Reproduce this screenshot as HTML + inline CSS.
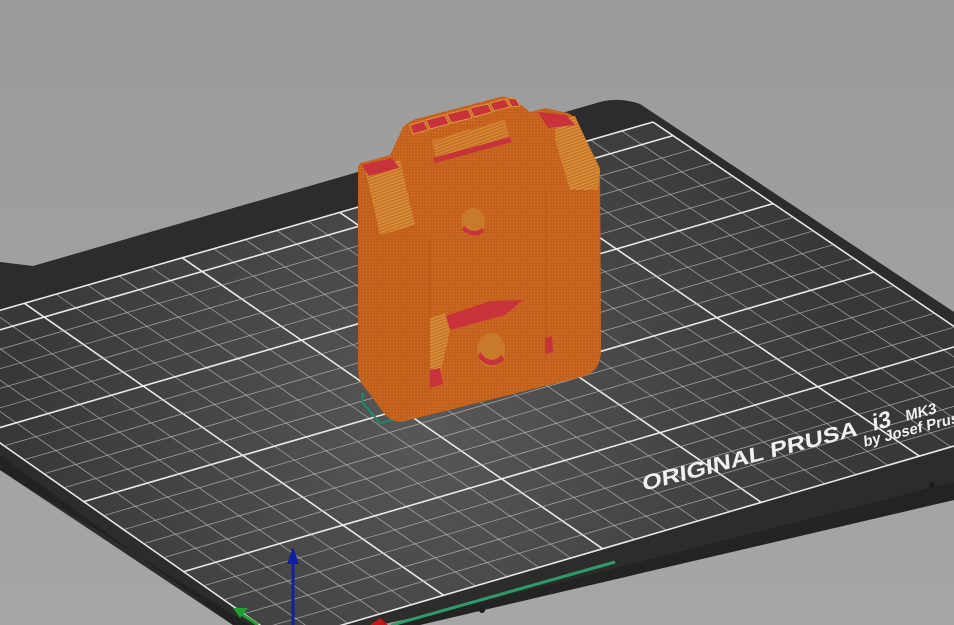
<!DOCTYPE html>
<html><head><meta charset="utf-8"><style>
html,body{margin:0;padding:0;width:954px;height:625px;overflow:hidden;background:#9e9e9e}
svg{display:block;overflow:hidden}
</style></head><body>
<svg id="s" width="954" height="625" viewBox="0 0 954 625" xmlns="http://www.w3.org/2000/svg">
<defs>
<linearGradient id="bg" x1="0" y1="0" x2="0" y2="1"><stop offset="0" stop-color="#9b9b9b"/><stop offset="1" stop-color="#a6a6a6"/></linearGradient>
<radialGradient id="pl" cx="430" cy="420" r="420" gradientUnits="userSpaceOnUse"><stop offset="0" stop-color="#585858"/><stop offset="0.6" stop-color="#444"/><stop offset="1" stop-color="#383838"/></radialGradient>
<pattern id="hatch" width="3" height="3" patternUnits="userSpaceOnUse"><rect width="3" height="3" fill="#c6621e"/><rect width="1" height="1" fill="#d4752a"/><rect x="1.5" y="1.5" width="1" height="1" fill="#b85a1a"/></pattern>
<pattern id="stripe" width="3" height="4" patternUnits="userSpaceOnUse" patternTransform="rotate(70)"><rect width="3" height="4" fill="#c8742a"/><rect width="1" height="4" fill="#dc9a3c"/></pattern>
</defs>
<rect width="954" height="625" fill="url(#bg)"/>
<!-- bed -->
<path d="M0,262 L33,266 L600,102 Q620,97 640,104 L954,312 L954,500 L380,625 L233,625 L0,470 Z" fill="#2c2c2c"/>
<path d="M0,455 L233,625 L250,625 L0,470 Z" fill="#222"/>
<path d="M954,482 L390,625 L420,625 L954,500Z" fill="#232323"/>
<!-- plate -->
<polygon points="653,122 -134,349 284,642 1077,410" fill="url(#pl)"/>
<g id="grid"></g>
<!-- text on plate -->
<g fill="#f0f0f0" font-family="Liberation Sans, sans-serif" font-weight="bold">
<text transform="translate(643,491) rotate(-14.5) skewX(-10)" font-size="21" textLength="222" lengthAdjust="spacingAndGlyphs">ORIGINAL PRUSA</text>
<text transform="translate(873,431) rotate(-14.5) skewX(-10)" font-size="23">i3</text>
<text transform="translate(906,421) rotate(-14.5) skewX(-10)" font-size="15">MK3</text>
<text transform="translate(864,447) rotate(-14.5) skewX(-10)" font-size="15">by Josef Prusa</text>
</g>
<!-- screws -->
<circle cx="932" cy="485" r="3" fill="#1c1c1c"/><circle cx="482" cy="610" r="3" fill="#1c1c1c"/>
<!-- green line on bed -->
<line x1="392" y1="625" x2="615" y2="562" stroke="#2e9a6a" stroke-width="3"/>
<!-- skirt -->
<path d="M363,393 L362,402 L380,423 L590,372 L596,362" fill="none" stroke="#1f8a6a" stroke-width="2"/>
<!-- object -->
<path d="M358,170 Q358,162 365,162 L390,155 L403,127 Q410,120 420,118 L500,97 Q510,95 520,104 L530,112 L545,108 L568,113 Q575,116 578,124 L600,168 L601,350 Q601,370 585,376 L405,421 Q392,424 383,412 L362,384 Q358,378 358,370 Z" fill="url(#hatch)"/>
<path d="M358,170 L430,240 L430,400 L405,421 Q392,424 383,412 L362,384 Q358,378 358,370Z" fill="#b0520f" opacity="0.12"/>
<!-- left side face -->
<path d="M365,168 L400,160 L415,225 L380,235 Z" fill="url(#stripe)"/>
<path d="M362,165 L392,158 L399,168 L369,176Z" fill="#c8323a"/>
<!-- right side block -->
<path d="M555,120 L575,116 L600,170 L598,190 L570,190 L555,140Z" fill="url(#stripe)"/>
<path d="M538,112 L566,115 L575,125 L548,128Z" fill="#c8323a"/>
<!-- top vents -->
<g fill="#c8323a" stroke="#dc9a3c" stroke-width="1">
<path d="M410,125 L424,121 L428,130 L413,134Z"/><path d="M426,120 L445,115 L449,124 L430,129Z"/><path d="M447,114 L468,109 L472,118 L451,123Z"/><path d="M470,108 L488,104 L492,112 L474,117Z"/><path d="M490,103 L505,99 L510,107 L494,111Z"/><path d="M507,98 L516,99 L520,106 L512,107Z"/>
</g>
<path d="M432,140 L505,120 L510,140 L436,160Z" fill="url(#stripe)" opacity="0.8"/>
<path d="M433,158 L510,137 L512,142 L435,163Z" fill="#c8323a"/>
<path d="M430,240 L430,390 M546,190 L546,360" stroke="#b0520f" stroke-width="1" opacity="0.6"/>
<!-- upper hole -->
<ellipse cx="473" cy="222" rx="12" ry="14" fill="#c87a2a"/>
<path d="M462,230 Q473,240 484,232 L482,228 Q473,235 464,226Z" fill="#c8323a"/>
<!-- lower block -->
<path d="M440,318 L490,301 L523,300 L505,315 L450,330Z" fill="#c8323a"/>
<path d="M430,318 L445,313 L450,330 L438,386 L430,386Z" fill="url(#stripe)"/>
<path d="M430,370 L440,368 L443,384 L430,388Z" fill="#c8323a"/>
<path d="M545,338 L552,336 L553,352 L545,354Z" fill="#c8323a"/>
<ellipse cx="491" cy="350" rx="14" ry="17" fill="#c87a2a"/>
<path d="M478,357 Q490,372 504,360 L502,355 Q490,366 480,352Z" fill="#c8323a"/>
<!-- axes -->
<line x1="293" y1="560" x2="293" y2="625" stroke="#1020a0" stroke-width="3"/>
<path d="M287,564 L293,547 L299,564Z" fill="#1020a0"/>
<line x1="240" y1="613" x2="258" y2="625" stroke="#20a030" stroke-width="3"/>
<path d="M233,608 L248,608 L240,618Z" fill="#20a030"/>
<path d="M370,625 L380,618 L388,625Z" fill="#c01818"/>
</svg>
<script>
(function(){
var C=[284,642],D=[1077,410],A=[653,122],B=[-134,349];
var x0=C[0],y0=C[1],x1=D[0],y1=D[1],x2=A[0],y2=A[1],x3=B[0],y3=B[1];
var dx1=x1-x2,dx2=x3-x2,dy1=y1-y2,dy2=y3-y2,sx=x0-x1+x2-x3,sy=y0-y1+y2-y3;
var den=dx1*dy2-dx2*dy1;
var g=(sx*dy2-dx2*sy)/den,h=(dx1*sy-sx*dy1)/den;
var a=x1-x0+g*x1,b=x3-x0+h*x3,c=x0,d=y1-y0+g*y1,e=y3-y0+h*y3,f=y0;
function P(u,v){var w=g*u+h*v+1;return [(a*u+b*v+c)/w,(d*u+e*v+f)/w];}
var s='';
function L(p,q,maj){s+='<line x1="'+p[0].toFixed(1)+'" y1="'+p[1].toFixed(1)+'" x2="'+q[0].toFixed(1)+'" y2="'+q[1].toFixed(1)+'" stroke="'+(maj?'#f2f2f2':'#bdbdbd')+'" stroke-width="'+(maj?1.6:0.8)+'" opacity="'+(maj?0.95:0.75)+'"/>';}
for(var i=0;i<=25;i++){var u=i/25;L(P(u,0),P(u,1),i%5==0||i==25);}
for(var j=0;j<=21;j++){var v=j/21;L(P(0,v),P(1,v),j%5==0||j==21);}
document.getElementById('grid').innerHTML=s;
})();
</script>
</body></html>
